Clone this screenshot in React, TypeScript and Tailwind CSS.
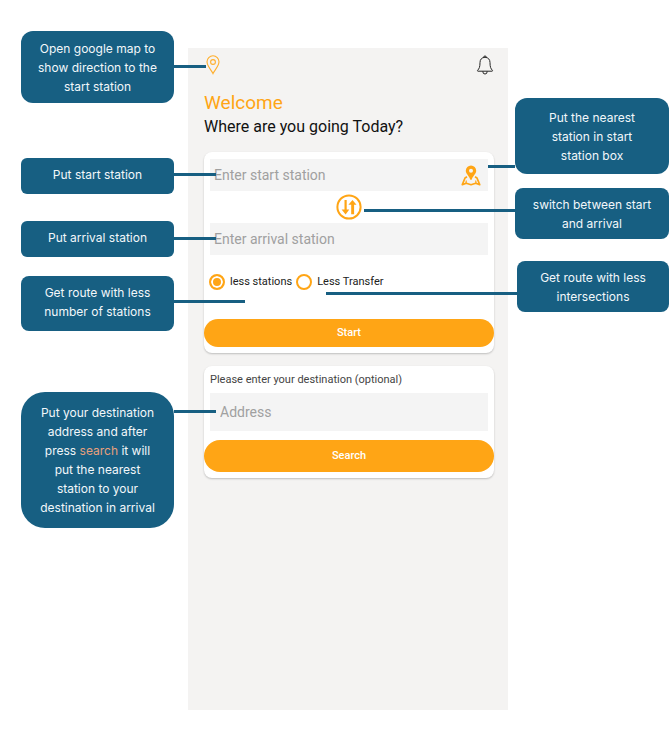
import { useState, type ReactNode } from "react";

type CalloutProps = {
  side: "left" | "right";
  className: string;
  line: string;
  children: ReactNode;
};

/** Annotation bubble with a leader line that reaches over the phone screen. */
function Callout({ side, className, line, children }: CalloutProps) {
  const anchor = side === "left" ? "left-full" : "right-full";
  return (
    <aside
      className={`relative flex flex-col justify-center bg-[#175f82] text-center text-[12px] leading-[19px] text-[#f2f7fa] ${className}`}
    >
      <p>{children}</p>
      <span aria-hidden="true" className={`absolute z-10 h-[3px] bg-[#175f82] ${anchor} ${line}`} />
    </aside>
  );
}

function PinIcon() {
  return (
    <svg viewBox="0 0 14 20" className="h-5 w-[14px]" fill="none" stroke="#ffae2b" strokeWidth="1.1">
      <path d="M7 18.600C5.200 14.800 1 11 1 6.800a6 6 0 0 1 12 0c0 4.200-4.200 8-6 11.800Z" />
      <circle cx="7" cy="7" r="2.400" />
    </svg>
  );
}

function BellIcon() {
  return (
    <svg viewBox="0 0 18 20" className="h-5 w-[18px]" fill="none" stroke="#262626" strokeWidth="1" strokeLinejoin="round">
      <path d="M7.600 2.400a1.400 1.400 0 0 1 2.800 0" />
      <path d="M9 2.300c-3.300 0-5 2.400-5 5.200 0 4.400-.8 6.300-2.400 7.800-.4.500-.1.900.4.900h14c.5 0 .8-.4.4-.9-1.600-1.500-2.400-3.400-2.400-7.800 0-2.800-1.700-5.200-5-5.200Z" />
      <path d="M6.900 16.300v.6a2.100 2.100 0 0 0 4.200 0v-.6" />
    </svg>
  );
}

function MapPinIcon() {
  return (
    <svg viewBox="0 0 20 21" className="h-[21px] w-5" fill="none">
      <path
        fill="#ffa515"
        fillRule="evenodd"
        d="M10 .5a5.200 5.200 0 0 0-5.200 5.200c0 3.300 3.600 5.300 4.500 9.100h1.400c.9-3.800 4.500-5.800 4.500-9.100A5.200 5.200 0 0 0 10 .5Zm0 3.300a2 2 0 1 1 0 4 2 2 0 0 1 0-4Z"
      />
      <path
        stroke="#ffa515"
        strokeWidth="1.700"
        strokeLinejoin="round"
        d="M6 11.800 4 13 1.300 19.600l4-1.400 4.700 1.500 4.700-1.500 4 1.400L16 13l-2-1.200"
      />
      <path stroke="#ffa515" strokeWidth="1.200" d="m5.300 15.500-.3 2.500M14.700 15.500l.3 2.500" />
    </svg>
  );
}

function SwapIcon() {
  return (
    <svg viewBox="0 0 26 26" className="size-[26px]" fill="none">
      <circle cx="13" cy="13" r="11.600" stroke="#ffa515" strokeWidth="2" />
      <path
        fill="#ffa515"
        d="M8.500 6h2.200v9.600h2.600L9.600 20.400 5.600 15.600h2.900ZM15.200 20.200V10.800h-2.800L16.500 6l4 4.800h-2.400v9.400Z"
      />
    </svg>
  );
}

type RadioProps = { label: string; checked: boolean; onSelect: () => void };

function RouteRadio({ label, checked, onSelect }: RadioProps) {
  return (
    <label className="flex items-center gap-[5px] text-[11px] leading-4 text-[#222]">
      <input
        type="radio"
        name="route"
        checked={checked}
        onChange={onSelect}
        className="size-4 shrink-0 appearance-none rounded-full border-2 border-[#ffa515] bg-white checked:bg-[#ffa515] checked:shadow-[inset_0_0_0_2px_white]"
      />
      {label}
    </label>
  );
}

const field =
  "block w-full bg-[#f4f4f4] text-[14px] text-[#333] outline-none placeholder:text-[#a0a0a0] placeholder:opacity-100";
const card = "rounded-lg bg-white shadow-[0_1px_2px_rgba(0,0,0,0.22)]";
const action = "block w-full rounded-full bg-[#ffa515] text-[11px] font-medium text-white";

export default function App() {
  const [route, setRoute] = useState("stations");

  return (
    <main className="grid min-h-screen grid-cols-[174px_minmax(0,1fr)_154px] bg-white font-[Inter,sans-serif]">
      <div className="flex flex-col pt-[31px] pl-[21px]">
        <Callout side="left" className="h-[72px] rounded-xl px-3" line="top-[34px] w-8">
          Open google map to show direction to the start station
        </Callout>
        <Callout side="left" className="mt-[55px] h-9 rounded-md pb-1" line="top-[15px] w-[42px]">
          Put start station
        </Callout>
        <Callout side="left" className="mt-[27px] h-9 rounded-md pb-1" line="top-[16px] w-[42px]">
          Put arrival station
        </Callout>
        <Callout side="left" className="mt-[19px] h-[55px] rounded-lg px-4 pb-1" line="top-[24px] w-[71px]">
          Get route with less number of stations
        </Callout>
        <Callout side="left" className="mt-[61px] h-[136px] rounded-[24px] px-2" line="top-[18px] w-[42px]">
          Put your destination
          <br />
          address and after
          <br />
          press <span className="text-[#e8a07c]">search</span> it will
          <br />
          put the nearest
          <br />
          station to your
          <br />
          destination in arrival
        </Callout>
      </div>

      <section className="mt-12 mr-[7px] mb-[29px] ml-[14px] min-h-[662px] bg-[#f4f3f2] pr-[14px] pl-4 font-['Roboto',sans-serif]">
        <header className="flex items-center justify-between pt-[7px] pl-[2px]">
          <button type="button" aria-label="Open map">
            <PinIcon />
          </button>
          <button type="button" aria-label="Notifications">
            <BellIcon />
          </button>
        </header>

        <h1 className="mt-4 text-[19px] leading-6 text-[#ffa515]">Welcome</h1>
        <p className="text-[16px] leading-6 text-[#111]">Where are you going Today?</p>

        <form className={`mt-[13px] pt-[7px] pb-[6px] ${card}`} onSubmit={(e) => e.preventDefault()}>
          <div className="px-[6px]">
            <div className="flex items-center bg-[#f4f4f4] pr-[7px]">
              <input aria-label="Start station" placeholder="Enter start station" className={`${field} h-8 pl-1`} />
              <button type="button" aria-label="Use nearest station" className="shrink-0">
                <MapPinIcon />
              </button>
            </div>
            <div className="flex h-8 items-center justify-center">
              <button type="button" aria-label="Switch stations">
                <SwapIcon />
              </button>
            </div>
            <input aria-label="Arrival station" placeholder="Enter arrival station" className={`${field} h-8 pl-1`} />
          </div>
          <div className="mt-[19px] flex gap-1 pl-[5px]">
            <RouteRadio label="less stations" checked={route === "stations"} onSelect={() => setRoute("stations")} />
            <RouteRadio label="Less Transfer" checked={route === "transfer"} onSelect={() => setRoute("transfer")} />
          </div>
          <button type="submit" className={`mt-[29px] h-7 ${action}`}>
            Start
          </button>
        </form>

        <form className={`mt-[13px] pt-[6px] pb-[6px] ${card}`} onSubmit={(e) => e.preventDefault()}>
          <div className="px-[6px]">
            <label htmlFor="address" className="block text-[11px] leading-4 text-[#444]">
              Please enter your destination (optional)
            </label>
            <input id="address" placeholder="Address" className={`${field} mt-[5px] h-[38px] pl-[10px]`} />
          </div>
          <button type="submit" className={`mt-[9px] h-8 ${action}`}>
            Search
          </button>
        </form>
      </section>

      <div className="flex flex-col pt-[98px]">
        <Callout side="right" className="h-[76px] rounded-xl px-5" line="top-[67px] w-[27px]">
          Put the nearest
          <br />
          station in start
          <br />
          station box
        </Callout>
        <Callout side="right" className="mt-[14px] h-[51px] rounded-lg px-3" line="top-[21px] w-[151px]">
          switch between start and arrival
        </Callout>
        <Callout side="right" className="mt-[22px] ml-[2px] h-[51px] rounded-lg px-4" line="top-[31px] w-[191px]">
          Get route with less intersections
        </Callout>
      </div>
    </main>
  );
}
